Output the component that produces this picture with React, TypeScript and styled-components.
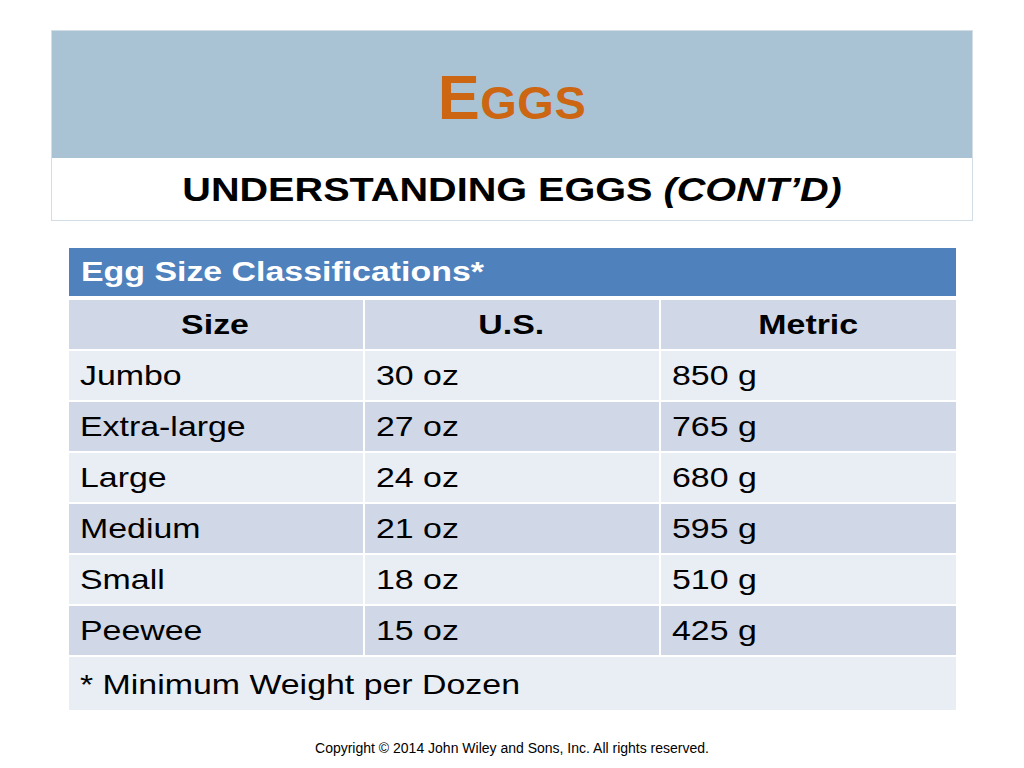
import styled, { createGlobalStyle } from "styled-components";

const GlobalStyle = createGlobalStyle`
  html, body {
    margin: 0;
    padding: 0;
    background: #ffffff;
  }
  body {
    font-family: "Liberation Sans", Arial, sans-serif;
  }
`;

const Slide = styled.div`
  width: 1024px;
  height: 768px;
  box-sizing: border-box;
  padding-top: 30px;
  display: flex;
  flex-direction: column;
  align-items: center;
  background: #ffffff;
`;

const Header = styled.div`
  width: 922px;
  display: flex;
  flex-direction: column;
  border: 1px solid #d3dde6;
  box-sizing: border-box;
`;

const TitleBand = styled.div`
  height: 127px;
  background: #a9c2d4;
  display: flex;
  align-items: center;
  justify-content: center;
  color: #cc6613;
  font-weight: bold;
  font-size: 47px;
  letter-spacing: 0.5px;
  padding-top: 4px;
  box-sizing: border-box;
`;

const BigCap = styled.span`
  font-size: 63px;
`;

const Subtitle = styled.div`
  height: 62px;
  display: flex;
  align-items: center;
  justify-content: center;
  font-size: 34px;
  font-weight: bold;
  color: #000;
`;

// the slide text is stretched wide, so every text run is scaled on x
const Stretch = styled.span<{ $x: number; $origin?: string }>`
  display: inline-block;
  white-space: nowrap;
  transform: scaleX(${p => p.$x});
  transform-origin: ${p => p.$origin || "left center"};
`;

const Table = styled.div`
  margin-top: 27px;
  width: 887px;
  display: grid;
  grid-template-columns: 294px 294px 295px;
  column-gap: 2px;
  row-gap: 2px;
`;

const Caption = styled.div`
  grid-column: 1 / -1;
  height: 48px;
  margin-bottom: 2px;
  background: #4f81bd;
  color: #ffffff;
  font-weight: bold;
  font-size: 28px;
  display: flex;
  align-items: center;
  padding-left: 12px;
`;

const Cell = styled.div<{ $shade: boolean; $head?: boolean; $span?: boolean }>`
  height: ${p => (p.$span ? "53px" : "49px")};
  background: ${p => (p.$shade ? "#d0d8e8" : "#e9edf4")};
  color: #000;
  font-size: 28px;
  font-weight: ${p => (p.$head ? "bold" : "normal")};
  display: flex;
  align-items: center;
  justify-content: ${p => (p.$head ? "center" : "flex-start")};
  padding-left: ${p => (p.$head ? "0" : "11px")};
  padding-top: ${p => (p.$span ? "2px" : "0")};
  box-sizing: border-box;
  grid-column: ${p => (p.$span ? "1 / -1" : "auto")};
`;

const Copyright = styled.div`
  margin-top: 30px;
  font-size: 14px;
  color: #000;
`;

const rows = [
  ["Jumbo", "30 oz", "850 g"],
  ["Extra-large", "27 oz", "765 g"],
  ["Large", "24 oz", "680 g"],
  ["Medium", "21 oz", "595 g"],
  ["Small", "18 oz", "510 g"],
  ["Peewee", "15 oz", "425 g"],
];

const SX = 1.21;

export default function App() {
  return (
    <>
      <GlobalStyle />
      <Slide>
        <Header>
          <TitleBand>
            <span>
              <BigCap>E</BigCap>GGS
            </span>
          </TitleBand>
          <Subtitle>
            <Stretch $x={1.165} $origin="center">
              UNDERSTANDING EGGS <i>(CONT’D)</i>
            </Stretch>
          </Subtitle>
        </Header>
        <Table>
          <Caption>
            <Stretch $x={SX}>Egg Size Classifications*</Stretch>
          </Caption>
          {["Size", "U.S.", "Metric"].map(h => (
            <Cell key={h} $shade $head>
              <Stretch $x={SX} $origin="center">{h}</Stretch>
            </Cell>
          ))}
          {rows.map((r, i) =>
            r.map((c, j) => (
              <Cell key={`${i}-${j}`} $shade={i % 2 === 1}>
                <Stretch $x={SX}>{c}</Stretch>
              </Cell>
            ))
          )}
          <Cell $shade={false} $span>
            <Stretch $x={SX}>* Minimum Weight per Dozen</Stretch>
          </Cell>
        </Table>
        <Copyright>Copyright © 2014 John Wiley and Sons, Inc. All rights reserved.</Copyright>
      </Slide>
    </>
  );
}
